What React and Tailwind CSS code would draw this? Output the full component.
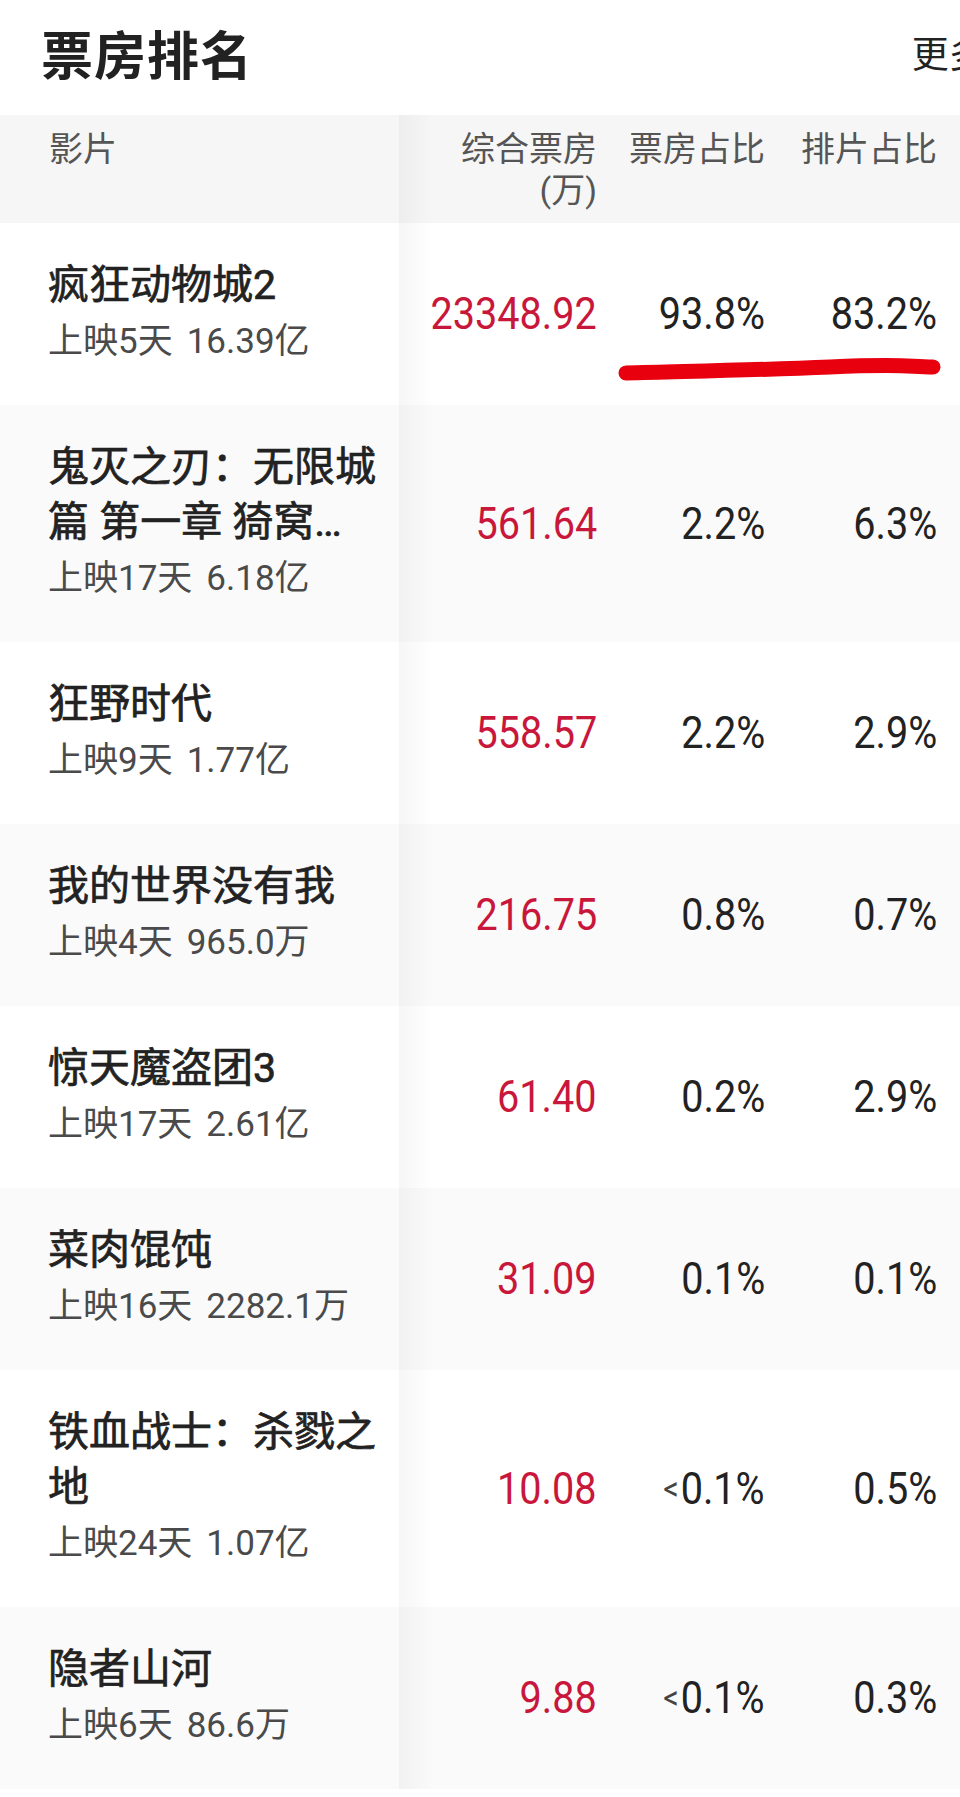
import React from "react";

const rows = [
  { title: "疯狂动物城2", days: "上映5天", total: "16.39亿", box: "23348.92", share: "93.8%", sched: "83.2%" },
  { title: "鬼灭之刃：无限城篇 第一章 猗窝…", days: "上映17天", total: "6.18亿", box: "561.64", share: "2.2%", sched: "6.3%" },
  { title: "狂野时代", days: "上映9天", total: "1.77亿", box: "558.57", share: "2.2%", sched: "2.9%" },
  { title: "我的世界没有我", days: "上映4天", total: "965.0万", box: "216.75", share: "0.8%", sched: "0.7%" },
  { title: "惊天魔盗团3", days: "上映17天", total: "2.61亿", box: "61.40", share: "0.2%", sched: "2.9%" },
  { title: "菜肉馄饨", days: "上映16天", total: "2282.1万", box: "31.09", share: "0.1%", sched: "0.1%" },
  { title: "铁血战士：杀戮之地", days: "上映24天", total: "1.07亿", box: "10.08", share: "<0.1%", sched: "0.5%" },
  { title: "隐者山河", days: "上映6天", total: "86.6万", box: "9.88", share: "<0.1%", sched: "0.3%" },
];

function Num({ v }) {
  if (v.startsWith("<")) {
    return (
      <span className="inline-block origin-right scale-x-[0.9]">
        <span className="text-[34px] text-[#444] mr-[2px] align-[4px]">&lt;</span>
        {v.slice(1)}
      </span>
    );
  }
  return <span className="inline-block origin-right scale-x-[0.9]">{v}</span>;
}

export default function App() {
  return (
    <div className="relative w-[960px] h-[1797px] overflow-hidden bg-white font-['Roboto','Noto_Sans_CJK_SC',sans-serif] text-[#222]">
      <div className="flex items-center h-[115px] pl-[41px]">
        <h1 className="text-[52px] font-bold leading-none tracking-[1px] text-[#222]">票房排名</h1>
        <span className="ml-auto mr-[-46px] text-[37px] leading-none whitespace-nowrap text-[#222] mt-[-4px]">更多 ›</span>
      </div>

      <div className="flex bg-[#f6f6f6] h-[108px]">
        <div className="w-[399px] pl-[49px] pt-[14px] text-[34px] leading-[41px] text-[#555]">影片</div>
        <div className="flex-1 flex items-start pt-[14px] pr-[23px] bg-[linear-gradient(to_right,rgba(0,0,0,0.035),rgba(0,0,0,0)_34px)] text-[34px] leading-[41px] text-[#555]">
          <div className="w-[198px] text-right">综合票房<br />(万)</div>
          <div className="w-[168px] text-right">票房占比</div>
          <div className="w-[172px] text-right">排片占比</div>
        </div>
      </div>

      {rows.map((r, i) => (
        <div key={i} className={`flex ${i % 2 === 1 ? "bg-[#fafafa]" : "bg-white"}`}>
          <div className="w-[399px] pl-[48px] pr-[16px] py-[35px]">
            <div className="text-[41px] leading-[55px] font-normal text-[#222] [-webkit-text-stroke:0.7px_#222]">{r.title}</div>
            <div className="text-[35px] leading-[57px] font-normal text-[#4a4a4a] whitespace-nowrap">
              {r.days}<span className="inline-block w-[14px]"></span>{r.total}
            </div>
          </div>
          <div className="flex-1 flex items-center pr-[23px] bg-[linear-gradient(to_right,rgba(0,0,0,0.035),rgba(0,0,0,0)_34px)] text-[44px] leading-none">
            <div className="w-[198px] text-right text-[#c8173a]"><Num v={r.box} /></div>
            <div className="w-[168px] text-right text-[#222]"><Num v={r.share} /></div>
            <div className="w-[172px] text-right text-[#222]"><Num v={r.sched} /></div>
          </div>
        </div>
      ))}

      <svg className="absolute left-0 top-0 pointer-events-none" width="960" height="400" viewBox="0 0 960 400">
        <path d="M626 373 C 700 371, 760 370, 830 367 S 900 366, 933 367" fill="none" stroke="#e8000f" strokeWidth="15" strokeLinecap="round" />
      </svg>
    </div>
  );
}
